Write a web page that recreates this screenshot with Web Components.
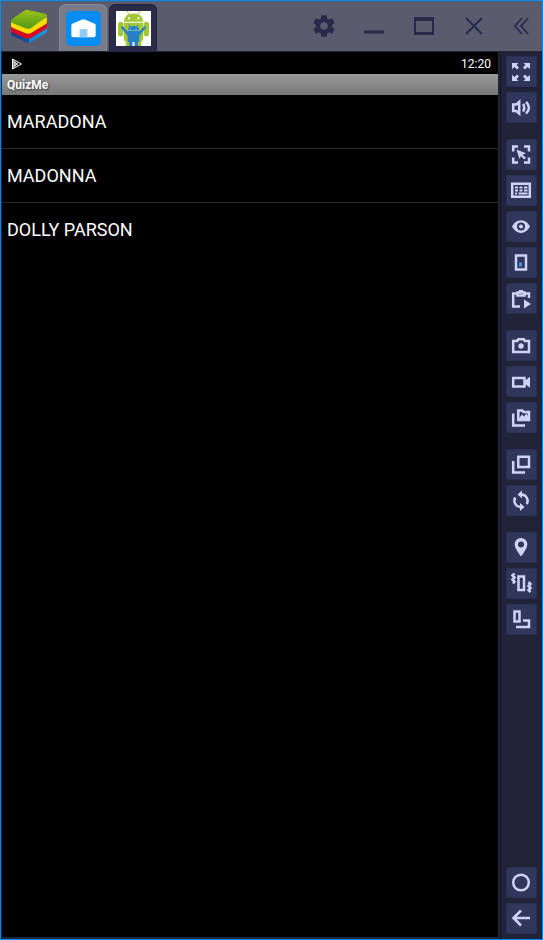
<!DOCTYPE html>
<html lang="en">
<head>
<meta charset="utf-8">
<title>QuizMe</title>
<style>
html,body{margin:0;height:100%}
body{font-family:Roboto,"Liberation Sans",sans-serif;background:#212339}
</style>
</head>
<body>
<emulator-window>
  <title-bar slot="top"></title-bar>
  <device-screen app="QuizMe" time="12:20">
    <quiz-item>MARADONA</quiz-item>
    <quiz-item>MADONNA</quiz-item>
    <quiz-item>DOLLY PARSON</quiz-item>
  </device-screen>
  <side-bar slot="side">
    <tool-group>
      <tool-button icon="fullscreen" label="Full screen"></tool-button>
      <tool-button icon="volume" label="Volume"></tool-button>
    </tool-group>
    <tool-group>
      <tool-button icon="cursor" label="Lock cursor"></tool-button>
      <tool-button icon="keyboard" label="Keyboard controls"></tool-button>
      <tool-button icon="eye" label="Show overlay"></tool-button>
      <tool-button icon="phone" label="Device"></tool-button>
      <tool-button icon="macro" label="Run macro"></tool-button>
    </tool-group>
    <tool-group>
      <tool-button icon="camera" label="Screenshot"></tool-button>
      <tool-button icon="video" label="Record"></tool-button>
      <tool-button icon="media" label="Media manager"></tool-button>
    </tool-group>
    <tool-group>
      <tool-button icon="windows" label="Instances"></tool-button>
      <tool-button icon="sync" label="Sync"></tool-button>
    </tool-group>
    <tool-group>
      <tool-button icon="pin" label="Location"></tool-button>
      <tool-button icon="shake" label="Shake"></tool-button>
      <tool-button icon="rotate" label="Rotate"></tool-button>
    </tool-group>
    <tool-group slot="bottom">
      <tool-button icon="home" label="Home"></tool-button>
      <tool-button icon="back" label="Back"></tool-button>
    </tool-group>
  </side-bar>
</emulator-window>
<script>
const define = (name, html, setup) => customElements.define(name, class extends HTMLElement {
  constructor() {
    super();
    const t = document.createElement('template');
    t.innerHTML = html;
    this.attachShadow({mode: 'open'}).append(t.content.cloneNode(true));
  }
  connectedCallback() { if (setup) setup(this, this.shadowRoot); }
});

define('emulator-window', `
<style>
:host{display:flex;flex-direction:column;box-sizing:border-box;min-height:100vh;border:1px solid #008cf4;background:#212339}
.body{display:flex;flex:1;padding-left:1px}
.screen{display:flex;flex:1;min-width:0;padding-bottom:2px}
</style>
<slot name="top"></slot>
<div class="body"><main class="screen"><slot></slot></main><slot name="side"></slot></div>`);

define('title-bar', `
<style>
:host{display:flex;height:50px;background:#5a5b6d;border-bottom:1px solid #24263a;color:#272a4b}
.logo{width:58px;display:flex;flex:none}
.tabs{display:flex;gap:2px;align-items:flex-end;flex:1}
button{appearance:none;border:0;padding:0;margin:0;background:none;color:inherit;display:grid;place-items:center}
.tab{width:48px;height:47px;box-sizing:border-box;border:1px solid #858793;border-bottom:0;padding-left:1px;border-radius:6px 6px 0 0;background:#797b88}
.tab.active{background:#292b49;border-color:#22243d}
.controls{display:flex}
.controls button{width:50px;height:50px}
.controls button:last-child{width:43px}
svg{display:block}
</style>
<div class="logo"><svg width="57" height="50" viewBox="1 1 57 50" role="img" aria-label="BlueStacks">
<defs><linearGradient id="g" x1="0" y1="0" x2="0" y2="1"><stop stop-color="#9dc313"/><stop offset="1" stop-color="#4f981c"/></linearGradient>
<linearGradient id="b"><stop stop-color="#113d83"/><stop offset=".5" stop-color="#174f98"/><stop offset=".51" stop-color="#0d87d0"/><stop offset="1" stop-color="#159ce4"/></linearGradient></defs>
<path fill="url(#b)" d="M11 31v4l14 7q3 1.500 6 0l15-9q1-1 1-3v-3L29 35z"/>
<path fill="#d50925" d="M11 26v5q0 1 2 2l12 5q3 1.300 6 0l15-9q1-1 1-3v-5L29 31z"/>
<path fill="#ffdf00" d="M11 22v4q0 1 2 2l12 5q3 1.300 6 0l15-9q1-1 1-3v-4L29 27z"/>
<path fill="url(#g)" d="M12 19 24.500 10.500Q26 9.500 28 10l18 4q1.600 1 .5 3L31 28q-2 1.500-5 .4L12 23q-2-1.500 0-4z"/>
</svg></div>
<div class="tabs">
<button class="tab" aria-label="Home tab"><svg width="35" height="35" viewBox="0 0 36 36"><rect width="36" height="36" rx="5" fill="#078cf2"/><path fill="#fff" d="M5.500 14.500Q5.500 13.500 6.500 13L16 9q2-.8 4 0l9.500 4q1 .5 1 1.500V25q0 2-2 2h-21q-2 0-2-2z"/><path fill="#91cdf8" d="M14 18.500h8V27h-8z"/></svg></button>
<button class="tab active" aria-label="QuizMe tab"><svg width="35" height="35" viewBox="0 0 36 36"><path fill="#fff" d="M0 0h36v36H0z"/>
<g fill="#a3c737"><path d="M8 11Q8.500 2.500 18 2.500T28 11zM8 12h20v17q0 2-2 2H10q-2 0-2-2z"/><rect x="2" y="11" width="5.500" height="15" rx="2.700"/><rect x="28.500" y="11" width="5.500" height="15" rx="2.700"/><path d="M10 29h6v7h-6zM20 29h6v7h-6z"/></g><path stroke="#a3c737" d="m11 0 3 4M25 0l-3 4"/><path fill="#fff" d="M12.500 6.500h2v2h-2zM22 6.500h2v2h-2z"/>
<g fill="#2780c6"><path d="M12 20q.5-4.500 6-4.500T24 20zM12 20.500h12V32H12zM13.500 31H17v5h-3.500zM19 31h3.500v5H19z"/></g><path stroke="#2780c6" stroke-width="2.600" stroke-linecap="round" fill="none" d="m6.500 17 6 7M29.500 17l-6 7"/><path stroke="#2780c6" d="m13 14 2 3M23 14l-2 3"/><path fill="#8bc2ec" d="M14 18h1.500v1H14zM20 18h1.500v1H20zM12 20h12v.6H12z"/></svg></button>
</div>
<div class="controls">
<button aria-label="Settings"><svg width="26" height="26" viewBox="0 0 24 24"><path fill="currentColor" d="M19.430 13a7.800 7.800 0 0 0 0-2l2.110-1.650a.5.5 0 0 0 .12-.64l-2-3.460a.5.5 0 0 0-.61-.22l-2.490 1a7.300 7.300 0 0 0-1.690-.98l-.38-2.650A.5.5 0 0 0 14 2h-4a.5.5 0 0 0-.49.42l-.38 2.650c-.61.25-1.170.59-1.690.98l-2.490-1a.5.5 0 0 0-.61.22l-2 3.460a.5.5 0 0 0 .12.640L4.570 11a7.800 7.800 0 0 0 0 2l-2.110 1.650a.5.5 0 0 0-.12.640l2 3.460c.12.220.39.300.61.220l2.490-1c.52.400 1.080.730 1.690.980l.38 2.650c.03.240.24.420.49.420h4c.25 0 .46-.18.49-.42l.38-2.650c.61-.25 1.170-.59 1.690-.98l2.490 1c.23.090.49 0 .61-.22l2-3.460a.5.5 0 0 0-.12-.64zM12 15.500a3.500 3.500 0 1 1 0-7 3.500 3.500 0 0 1 0 7z"/></svg></button>
<button aria-label="Minimize"><svg width="20" height="20"><path fill="currentColor" d="M0 14.500h20v3H0z"/></svg></button>
<button aria-label="Maximize"><svg width="20" height="18"><path fill="currentColor" fill-rule="evenodd" d="M0 0h20v18H0zM2 4v11h16V4z"/></svg></button>
<button aria-label="Close"><svg width="18" height="18"><path stroke="currentColor" stroke-width="2" d="m1 1 16 16M17 1 1 17"/></svg></button>
<button aria-label="Collapse sidebar"><svg width="16" height="18" fill="none" stroke="currentColor" stroke-width="1.800"><path d="M9 1 2 9l7 8M15 1 8 9l7 8"/></svg></button>
</div>`);

define('device-screen', `
<style>
:host{display:flex;flex-direction:column;flex:1;min-width:0;background:#000;color:#fff}
.status{display:flex;justify-content:space-between;align-items:center;height:22px;padding:1px 7px 0 9px;font-size:12px;line-height:22px;box-sizing:border-box}
h1{margin:0;height:21px;padding-left:5px;background:linear-gradient(#989898,#787878);font-size:12px;line-height:22px;font-weight:700;text-shadow:1px 1px 2px #333}
svg{display:block}
</style>
<div class="status"><svg width="12" height="12"><path fill="#aaa" d="M1 1v10l5-5z"/><path fill="none" stroke="#eee" d="m1.500 1 6 7M1.500 11l6-7M1.500 1v10l9-5z"/></svg><time></time></div>
<h1></h1>
<div role="list"><slot></slot></div>`, (el, r) => {
  r.querySelector('time').textContent = el.getAttribute('time');
  r.querySelector('h1').textContent = el.getAttribute('app');
});

define('quiz-item', `
<style>
:host{display:block;height:53px;padding-left:5px;border-bottom:1px solid #282828;font-size:18px;line-height:54px;color:#fff}
:host(:last-child){border-color:transparent}
</style><slot></slot>`, el => el.setAttribute('role', 'listitem'));

define('side-bar', `
<style>
:host{display:flex;flex-direction:column;justify-content:space-between;width:36px;padding:4px 0 5px 5px;margin-left:2px;border-left:1px solid #121326;background:#212339}
nav{display:flex;flex-direction:column;gap:16px}
</style><nav><slot></slot></nav><slot name="bottom"></slot>`);

define('tool-group', `<style>:host{display:flex;flex-direction:column;gap:5px}</style><slot></slot>`);

const C = '#ccd6f4';
const icons = {
  fullscreen: `<path class="f" d="M6 7h6.500l-2 2 2.500 2.500-2 2L8.500 11 6 13zM24 7h-6.500l2 2-2.500 2.500 2 2L21.500 11 24 13zM6 25h6.500l-2-2 2.500-2.500-2-2L8.500 21 6 19zM24 25h-6.500l2-2-2.500-2.500 2-2L21.500 21l2.500-2z"/>`,
  volume: `<path d="M7.200 12.500h3l3-2.500v11.500l-3-2.500h-3zM17 12q2.500 3.700 0 7.500M20 10q6 5.700 0 11.500"/>`,
  cursor: `<path d="M7.200 12.500v-5H12M18 7.500h5v5M7.200 18.500v5H12M18 23.500h5v-5"/><path class="f" d="m10.500 10.500 9.500 3.700-3.500 1.500 3.500 3-1.800 1.800-3.200-3.500-1.500 3z"/>`,
  keyboard: `<path d="M6.200 8.800h17.600v13H6.200z"/><path class="f" d="M9 11.500h3v2H9zM13.500 11.500h3v2h-3zM18 11.500h3.500v2H18zM9 14.500h3v2H9zM13.500 14.500h3v2h-3zM18 14.500h3.500v2H18zM9 17.500h2v2H9zM12.500 17.500h9v2h-9z"/>`,
  eye: `<path class="f" fill-rule="evenodd" d="M6 15.500Q9.500 9.200 15 9.200t9 6.300q-3.500 6.500-9 6.500t-9-6.500zm9-4a4 4 0 1 0 0 8 4 4 0 0 0 0-8z"/><circle class="f" cx="15" cy="15.500" r="2"/>`,
  phone: `<path d="M10 8.500h10v14H10z"/><path fill="#3798e8" d="M13 15.500h3v4h-3z"/>`,
  macro: `<path d="M14 23.500H7.200V10.500H11M19 10.500h4V15M11.500 9.500h7v3h-7z"/><path class="f" d="M13 7h4v3h-4zM18 16.500l7 4.500-7 4.500z"/>`,
  camera: `<path d="M7.200 11h4l1-1.700h5.600l1 1.700H23v11H7.200z"/><circle class="f" cx="15" cy="16" r="2.700"/>`,
  video: `<path d="M7.200 12h11.300v8.500H7.200z"/><path class="f" d="m18.500 15 5.500-4.200v11L18.500 17.500z"/>`,
  media: `<path d="M7.200 11.500v12H19M12.300 18v-9.500h4l1 1.500H23v8z"/><path class="f" d="m12.500 17 3.500-4.500 2 2 2.500-3 3 5.500z"/>`,
  windows: `<path d="M12.300 7.700H23V18H12.300zM7.200 12v11.500H19"/>`,
  sync: `<path d="M14.500 9.500h1a6.300 6.300 0 0 1 5.200 9.500M15.500 22h-1a6.300 6.300 0 0 1-5.200-9.500"/><path class="f" d="M16 5.500v8l-4.500-4zM14 18v8l4.500-4z"/>`,
  pin: `<path class="f" fill-rule="evenodd" d="M15 6a6.300 6.300 0 0 1 6.300 6.300q0 4.200-6.300 12.200-6.300-8-6.300-12.200A6.300 6.300 0 0 1 15 6zm0 3.500a3 3 0 1 0 0 6 3 3 0 0 0 0-6z"/>`,
  shake: `<path d="M12.500 8.500h5.500v13.500h-5.500zM8.500 5.500l-2 2 2 2-2 2 2 2-1.500 2M22.500 14l2 2-2 2 2 2-2 2 2 2"/>`,
  rotate: `<path d="M8.500 7.500h5v10h-5zM17 16.500h6V23H10"/>`,
  home: `<circle cx="15" cy="15.500" r="7.800"/>`,
  back: `<path d="M24 15H8M15 7.500 7.500 15l7.500 7.500"/>`
};
define('tool-button', `
<style>
:host{display:block;width:31px;height:31px}
button{appearance:none;display:block;box-sizing:border-box;width:31px;height:31px;margin:0;padding:0;border:0;border-radius:3px;background:#30365c;box-shadow:inset 0 0 0 1px #2b3052}
svg{display:block;fill:none;stroke:${C};stroke-width:2.500}
.f{fill:${C};stroke:none}
svg [fill^="#"]{stroke:none}
</style><button><svg width="31" height="31" viewBox="0 0 31 31"></svg></button>`, (el, r) => {
  r.querySelector('svg').innerHTML = icons[el.getAttribute('icon')];
  r.querySelector('button').setAttribute('aria-label', el.getAttribute('label'));
});
</script>
</body>
</html>
